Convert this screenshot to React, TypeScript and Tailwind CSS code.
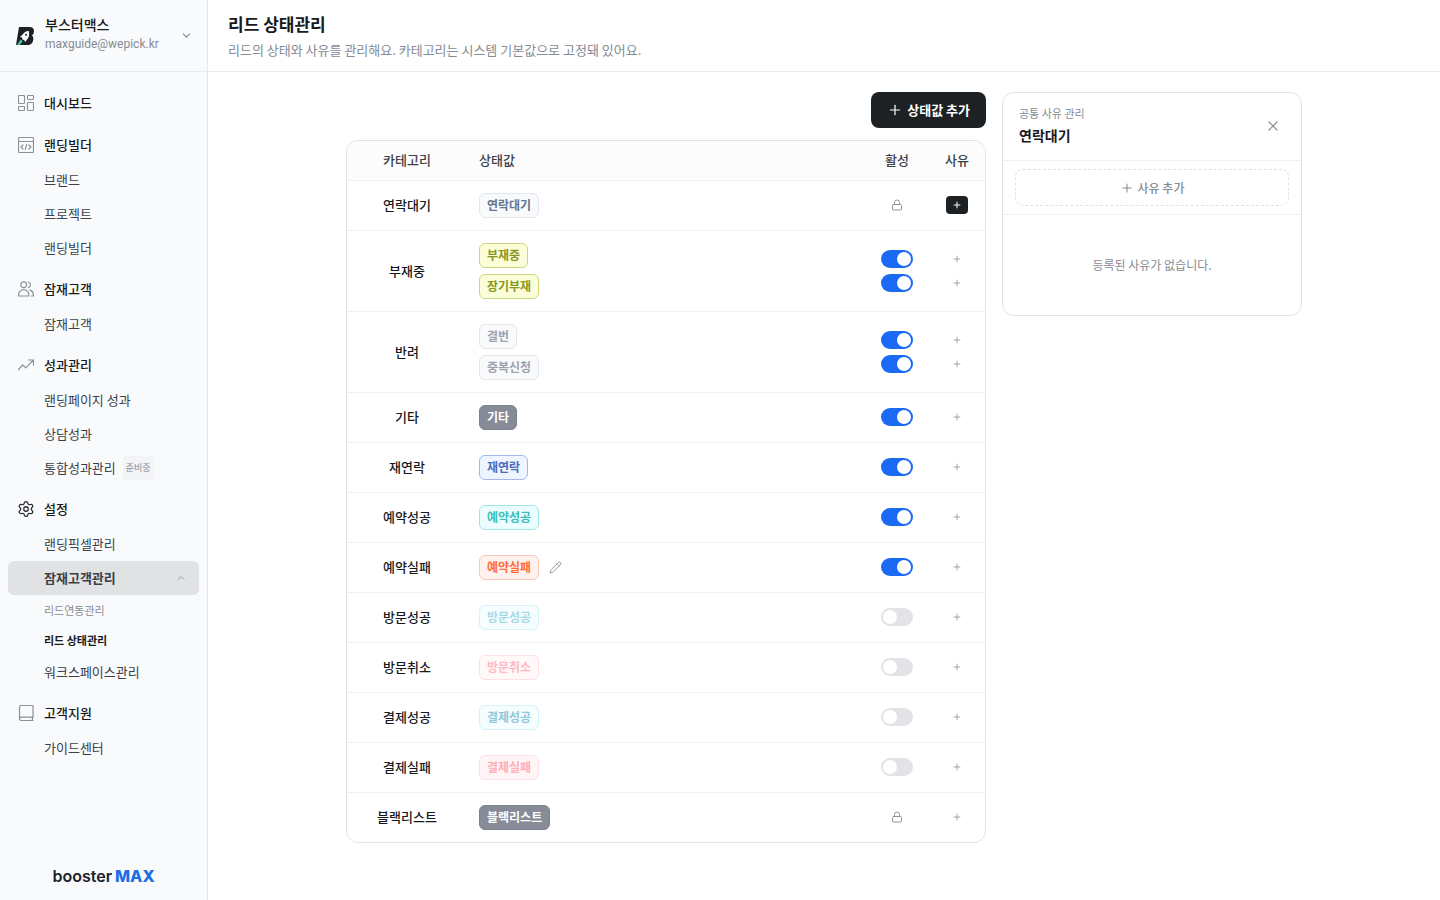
import { useState } from "react";
import { ChevronDown, ChevronUp, Lock, Pencil, Plus, Settings, X } from "lucide-react";
import clsx from "clsx";

const iconProps = {
  width: 16,
  height: 16,
  viewBox: "0 0 16 16",
  fill: "none",
  stroke: "currentColor",
  strokeLinecap: "round" as const,
  strokeLinejoin: "round" as const,
};

function DashboardIcon() {
  return (
    <svg {...iconProps} strokeWidth="1.1">
      <rect x="0.5" y="0.5" width="6" height="8" rx="0.7" />
      <rect x="9.5" y="0.5" width="6" height="4" rx="0.7" />
      <rect x="0.5" y="11.5" width="6" height="4" rx="0.7" />
      <rect x="9.5" y="7.5" width="6" height="8" rx="0.7" />
    </svg>
  );
}

function BuilderIcon() {
  return (
    <svg {...iconProps} strokeWidth="1.2">
      <rect x="0.5" y="0.5" width="15" height="15" rx="1" />
      <path d="M0.5 4.5h15" />
      <path d="M5 8 3 10l2 2M11 8l2 2-2 2M8.7 7.6l-1.4 4.8" />
    </svg>
  );
}

function UsersIcon() {
  return (
    <svg {...iconProps} strokeWidth="1.2">
      <circle cx="5.7" cy="3.8" r="2.9" />
      <path d="M0.6 15v-1.2a5.1 5.1 0 0 1 10.2 0V15z" />
      <path d="M10.3 1a2.9 2.9 0 0 1 0 5.6M12.2 9.1a5.2 5.2 0 0 1 3.2 4.7V15h-2" />
    </svg>
  );
}

function TrendIcon() {
  return (
    <svg {...iconProps} strokeWidth="1.2">
      <path d="M0.6 12.5 4.6 8l3.2 2.8 7.4-7.6M10.5 3h5v5" />
    </svg>
  );
}

function BookIcon() {
  return (
    <svg {...iconProps} strokeWidth="1.2">
      <path d="M15 12.2V1.5a1 1 0 0 0-1-1H3a1.6 1.6 0 0 0-1.5 1.5v11.8" />
      <path d="M15 12.2H3.2a1.6 1.6 0 0 0 0 3.3H15M14.4 12.4v3" />
    </svg>
  );
}

function BrandMark() {
  return (
    <svg width="20" height="20" viewBox="0 0 20 20">
      <path
        d="M4 1h10.5C17.3 1 19 2.6 19 5c0 2-.8 3.6-2.3 4.5 1.2.7 1.8 1.9 1.6 3.7C18 16.8 16 19 12.5 19H1z"
        fill="#1b1f26"
      />
      <path
        d="M13.8 5c-3.2.2-5.2 1.6-6.5 4L5 10.8l1.9.8.5 1.9 1.7.6 1.2 2 1.7-2.5c2-1.7 2.6-5 1.8-8.6z"
        fill="#fff"
      />
      <circle cx="11" cy="8.8" r="1" fill="#1b1f26" />
      <path d="M5.6 13.4 2 19h2.7l3-3.8z" fill="#3fc4a0" />
    </svg>
  );
}

type NavItem = {
  label: string;
  badge?: string;
  active?: boolean;
  children?: { label: string; active?: boolean }[];
};

const nav: { title: string; icon: React.ReactNode; active?: boolean; items: NavItem[] }[] = [
  { title: "대시보드", icon: <DashboardIcon />, items: [] },
  {
    title: "랜딩빌더",
    icon: <BuilderIcon />,
    items: [{ label: "브랜드" }, { label: "프로젝트" }, { label: "랜딩빌더" }],
  },
  { title: "잠재고객", icon: <UsersIcon />, items: [{ label: "잠재고객" }] },
  {
    title: "성과관리",
    icon: <TrendIcon />,
    items: [
      { label: "랜딩페이지 성과" },
      { label: "상담성과" },
      { label: "통합성과관리", badge: "준비중" },
    ],
  },
  {
    title: "설정",
    icon: <Settings size={18} strokeWidth={1.7} />,
    active: true,
    items: [
      { label: "랜딩픽셀관리" },
      {
        label: "잠재고객관리",
        active: true,
        children: [{ label: "리드연동관리" }, { label: "리드 상태관리", active: true }],
      },
      { label: "워크스페이스관리" },
    ],
  },
  { title: "고객지원", icon: <BookIcon />, items: [{ label: "가이드센터" }] },
];

type Status = { label: string; color: string; on?: boolean; editable?: boolean };

const categories: { name: string; locked?: boolean; selected?: boolean; statuses: Status[] }[] = [
  {
    name: "연락대기",
    locked: true,
    selected: true,
    statuses: [{ label: "연락대기", color: "border-[#e2e7ee] bg-[#f8fafc] text-[#64748b]" }],
  },
  {
    name: "부재중",
    statuses: [
      { label: "부재중", color: "border-[#cbd67c] bg-[#fbfed9] text-[#8a961f]", on: true },
      { label: "장기부재", color: "border-[#cbd67c] bg-[#fbfed9] text-[#8a961f]", on: true },
    ],
  },
  {
    name: "반려",
    statuses: [
      { label: "결번", color: "border-[#e3e5ea] bg-[#f9fafb] text-[#9ca3af]", on: true },
      { label: "중복신청", color: "border-[#e3e5ea] bg-[#f9fafb] text-[#9ca3af]", on: true },
    ],
  },
  {
    name: "기타",
    statuses: [{ label: "기타", color: "border-[#7c828e] bg-[#868b97] text-white", on: true }],
  },
  {
    name: "재연락",
    statuses: [{ label: "재연락", color: "border-[#a3b7ea] bg-[#eff5ff] text-[#4a6cba]", on: true }],
  },
  {
    name: "예약성공",
    statuses: [{ label: "예약성공", color: "border-[#a0e7e4] bg-[#ebfdfe] text-[#3dbdb9]", on: true }],
  },
  {
    name: "예약실패",
    statuses: [
      { label: "예약실패", color: "border-[#fbc5b8] bg-[#fff2ee] text-[#ff6b35]", on: true, editable: true },
    ],
  },
  {
    name: "방문성공",
    statuses: [{ label: "방문성공", color: "border-[#d5f2f6] bg-[#f5fdff] text-[#a5dbe8]" }],
  },
  {
    name: "방문취소",
    statuses: [{ label: "방문취소", color: "border-[#ffe0e4] bg-[#fff9f9] text-[#ffb8c1]" }],
  },
  {
    name: "결제성공",
    statuses: [{ label: "결제성공", color: "border-[#d5f2f6] bg-[#f5fdff] text-[#93c8da]" }],
  },
  {
    name: "결제실패",
    statuses: [{ label: "결제실패", color: "border-[#ffe0e4] bg-[#fff5f6] text-[#ffadb8]" }],
  },
  {
    name: "블랙리스트",
    locked: true,
    statuses: [{ label: "블랙리스트", color: "border-[#7c828e] bg-[#868b97] text-white" }],
  },
];

function Toggle({ label, defaultOn }: { label: string; defaultOn?: boolean }) {
  const [on, setOn] = useState(!!defaultOn);
  return (
    <label className="flex h-[18px] w-8 cursor-pointer items-center rounded-full bg-[#e2e3e7] p-0.5 has-checked:justify-end has-checked:bg-[#1a6af4]">
      <input
        type="checkbox"
        role="switch"
        aria-label={label}
        className="sr-only"
        checked={on}
        onChange={(e) => setOn(e.target.checked)}
      />
      <span className="size-3.5 rounded-full bg-white" />
    </label>
  );
}

function Sidebar() {
  return (
    <aside className="flex w-52 shrink-0 flex-col border-r border-[#e4e5e9] bg-[#f9fafc]">
      <button type="button" className="flex h-[72px] items-center border-b border-[#e9eaed] pr-3.5 pl-[15px] text-left">
        <BrandMark />
        <span className="ml-2.5 flex-1 pb-1">
          <span className="block text-sm leading-5 font-medium text-[#18191c]">부스터맥스</span>
          <span className="block font-['Roboto'] text-xs leading-5 text-[#868b94]">maxguide@wepick.kr</span>
        </span>
        <ChevronDown size={13} strokeWidth={2} className="text-[#868b94]" />
      </button>
      <nav className="flex flex-1 flex-col gap-1.5 px-2 pt-[13px]">
        {nav.map((group) => (
          <div key={group.title}>
            <a href="#" className="flex h-9 items-center text-[13px] font-medium text-[#18191c]">
              <span
                className={clsx(
                  "flex w-9 justify-center",
                  group.active ? "text-[#2b2d33]" : "text-[#8b909a]"
                )}
              >
                {group.icon}
              </span>
              {group.title}
            </a>
            {group.items.map((item) => (
              <div key={item.label}>
                <a
                  href="#"
                  className={clsx(
                    "flex h-[34px] items-center rounded-md pr-3 pl-9 text-[13px] text-[#3c3f47]",
                    item.active && "bg-[#e1e2e4] font-bold"
                  )}
                >
                  {item.label}
                  {item.badge && (
                    <span className="ml-[7px] flex h-6 items-center rounded-sm bg-[#f3f4f6] px-[3px] text-[9px] text-[#868b94]">
                      {item.badge}
                    </span>
                  )}
                  {item.active && <ChevronUp size={12} strokeWidth={2} className="ml-auto text-[#9a9ea7]" />}
                </a>
                {item.children?.map((child) => (
                  <a
                    key={child.label}
                    href="#"
                    className={clsx(
                      "flex h-[30px] items-center pl-9 text-[11px]",
                      child.active ? "font-bold text-[#18191c]" : "text-[#868b94]"
                    )}
                  >
                    {child.label}
                  </a>
                ))}
              </div>
            ))}
          </div>
        ))}
      </nav>
      <div className="flex h-12 items-center justify-center gap-[3px] font-['Inter'] text-base">
        <span className="font-semibold text-[#1e222b]">booster</span>
        <span className="font-extrabold text-[#1a6fe8]">MAX</span>
      </div>
    </aside>
  );
}

function StatusTable() {
  return (
    <div className="overflow-hidden rounded-xl border border-[#e2e3e7]">
      <table className="w-full table-fixed text-[13px] leading-5">
        <colgroup>
          <col className="w-[120px]" />
          <col />
          <col className="w-16" />
          <col className="w-14" />
        </colgroup>
        <thead className="bg-[#fcfcfc] text-[#3c3f47]">
          <tr className="h-[39px] border-b border-[#f0f1f4]">
            <th className="font-medium">카테고리</th>
            <th className="px-3 text-left font-medium">상태값</th>
            <th className="font-medium">활성</th>
            <th className="font-medium">사유</th>
          </tr>
        </thead>
        <tbody>
          {categories.map((category) => (
            <tr key={category.name} className="border-b border-[#f0f1f4] last:border-b-0">
              <td className="text-center font-medium text-[#18191c]">{category.name}</td>
              <td className="px-3 py-3">
                <div className="flex flex-col gap-1.5">
                  {category.statuses.map((status) => (
                    <div key={status.label} className="flex items-center gap-2.5">
                      <span
                        className={clsx(
                          "flex h-[25px] items-center rounded-md border px-[7px] pb-px text-xs leading-5 font-bold",
                          status.color
                        )}
                      >
                        {status.label}
                      </span>
                      {status.editable && (
                        <button type="button" aria-label="수정">
                          <Pencil size={13} strokeWidth={1.6} className="text-[#868b94]" />
                        </button>
                      )}
                    </div>
                  ))}
                </div>
              </td>
              <td>
                <div className="flex flex-col items-center gap-1.5">
                  {category.locked ? (
                    <Lock size={12} strokeWidth={1.8} className="text-[#868b94]" />
                  ) : (
                    category.statuses.map((status) => (
                      <Toggle key={status.label} label={status.label} defaultOn={status.on} />
                    ))
                  )}
                </div>
              </td>
              <td>
                <div className="flex flex-col items-center gap-1.5">
                  {category.statuses.map((status) => (
                    <button
                      key={status.label}
                      type="button"
                      aria-label={`${status.label} 사유`}
                      className={clsx(
                        "flex h-[18px] w-[22px] items-center justify-center rounded-sm",
                        category.selected ? "bg-[#1e2124] text-white" : "text-[#a0a4ad]"
                      )}
                    >
                      <Plus size={10} strokeWidth={2.4} />
                    </button>
                  ))}
                </div>
              </td>
            </tr>
          ))}
        </tbody>
      </table>
    </div>
  );
}

function ReasonPanel() {
  return (
    <section className="w-[300px] shrink-0 rounded-xl border border-[#e2e3e7]">
      <div className="flex h-[68px] items-center justify-between border-b border-[#f0f1f4] px-4 pb-0.5">
        <div className="pb-0.5">
          <p className="text-[11px] leading-5 text-[#868b94]">공통 사유 관리</p>
          <h2 className="text-sm leading-6 font-bold text-[#18191c]">연락대기</h2>
        </div>
        <button type="button" aria-label="닫기" className="p-1 text-[#868b94]">
          <X size={16} strokeWidth={1.8} />
        </button>
      </div>
      <div className="border-b border-[#f0f1f4] px-3 py-2">
        <button
          type="button"
          className="flex h-[37px] w-full items-center justify-center gap-1 rounded-lg border border-dashed border-[#dfe1e5] text-xs font-medium text-[#868b94]"
        >
          <Plus size={14} strokeWidth={1.8} />
          사유 추가
        </button>
      </div>
      <p className="py-10 text-center text-xs leading-5 text-[#868b94]">등록된 사유가 없습니다.</p>
    </section>
  );
}

export default function App() {
  return (
    <div className="flex min-h-screen bg-white font-['Noto_Sans_CJK_KR','Noto_Sans',sans-serif]">
      <Sidebar />
      <div className="flex-1">
        <header className="flex h-[72px] flex-col justify-center border-b border-[#e9eaed] px-5">
          <h1 className="text-[17px] leading-7 font-bold text-[#18191c]">리드 상태관리</h1>
          <p className="text-[13px] leading-6 text-[#868b94]">
            리드의 상태와 사유를 관리해요. 카테고리는 시스템 기본값으로 고정돼 있어요.
          </p>
        </header>
        <main className="mx-auto flex max-w-[996px] items-start gap-4 p-5">
          <div className="flex flex-1 flex-col gap-3">
            <button
              type="button"
              className="flex h-9 items-center gap-1 self-end rounded-lg bg-[#1e2124] px-4 text-[13px] font-bold text-white"
            >
              <Plus size={16} strokeWidth={1.8} />
              상태값 추가
            </button>
            <StatusTable />
          </div>
          <ReasonPanel />
        </main>
      </div>
    </div>
  );
}
